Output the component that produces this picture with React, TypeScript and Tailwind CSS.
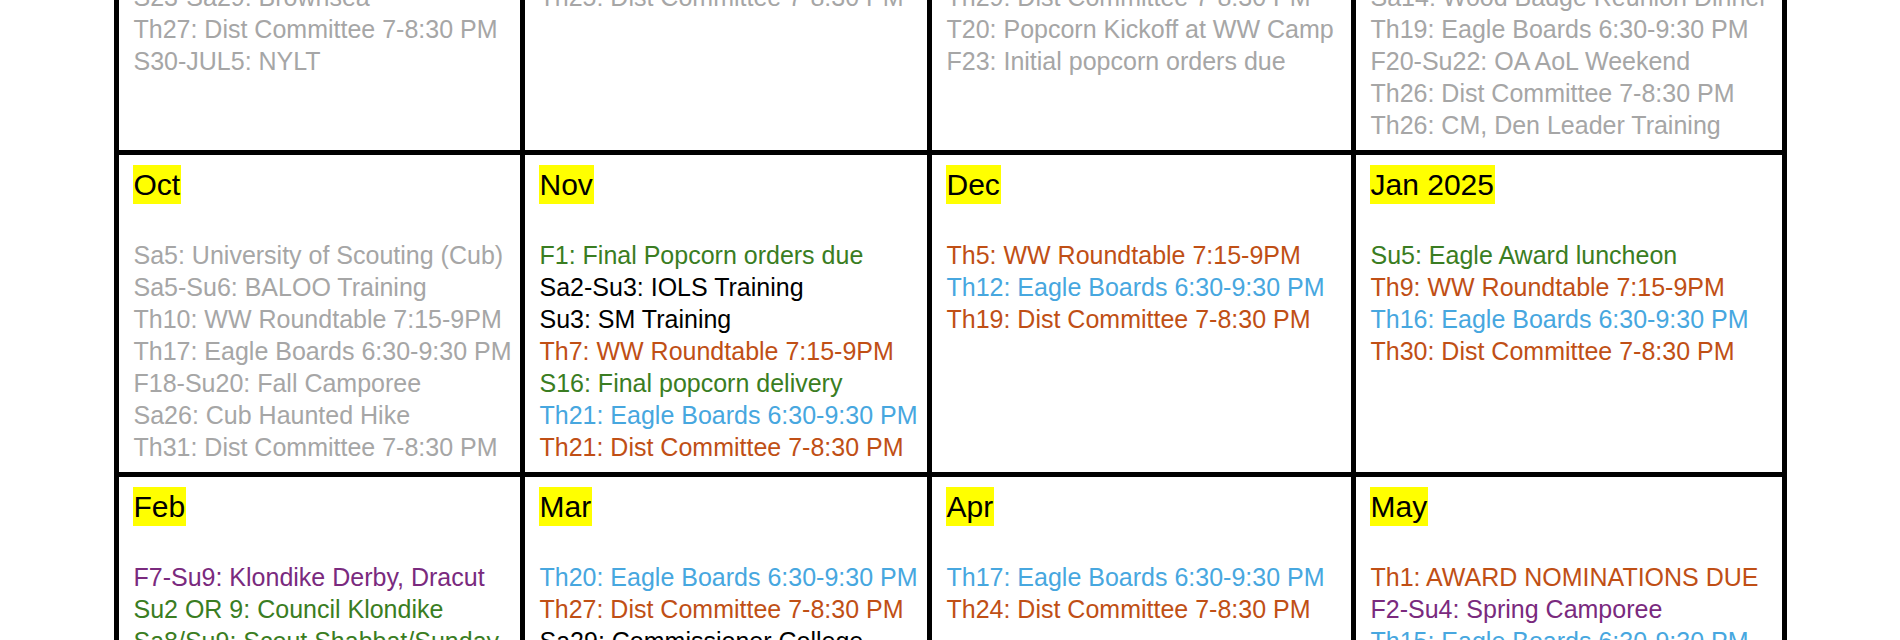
import React from "react";

type Ev = { t: string; c: string };

const G = "text-[#a6a6a6]";
const GR = "text-[#3a7d22]";
const OR = "text-[#c04f15]";
const BL = "text-[#47a7df]";
const PU = "text-[#7a2a7e]";
const BK = "text-black";

type Cell = { month?: string; events: Ev[] };

const row1: Cell[] = [
  {
    events: [
      { t: "S23-Sa29: Brownsea", c: G },
      { t: "Th27: Dist Committee 7-8:30 PM", c: G },
      { t: "S30-JUL5: NYLT", c: G },
    ],
  },
  { events: [{ t: "Th25: Dist Committee 7-8:30 PM", c: G }] },
  {
    events: [
      { t: "Th29: Dist Committee 7-8:30 PM", c: G },
      { t: "T20: Popcorn Kickoff at WW Camp", c: G },
      { t: "F23: Initial popcorn orders due", c: G },
    ],
  },
  {
    events: [
      { t: "Sa14: Wood Badge Reunion Dinner", c: G },
      { t: "Th19: Eagle Boards 6:30-9:30 PM", c: G },
      { t: "F20-Su22: OA AoL Weekend", c: G },
      { t: "Th26: Dist Committee 7-8:30 PM", c: G },
      { t: "Th26: CM, Den Leader Training", c: G },
    ],
  },
];

const row2: Cell[] = [
  {
    month: "Oct",
    events: [
      { t: "Sa5: University of Scouting (Cub)", c: G },
      { t: "Sa5-Su6: BALOO Training", c: G },
      { t: "Th10: WW Roundtable 7:15-9PM", c: G },
      { t: "Th17: Eagle Boards 6:30-9:30 PM", c: G },
      { t: "F18-Su20: Fall Camporee", c: G },
      { t: "Sa26: Cub Haunted Hike", c: G },
      { t: "Th31: Dist Committee 7-8:30 PM", c: G },
    ],
  },
  {
    month: "Nov",
    events: [
      { t: "F1: Final Popcorn orders due", c: GR },
      { t: "Sa2-Su3: IOLS Training", c: BK },
      { t: "Su3: SM Training", c: BK },
      { t: "Th7: WW Roundtable 7:15-9PM", c: OR },
      { t: "S16: Final popcorn delivery", c: GR },
      { t: "Th21: Eagle Boards 6:30-9:30 PM", c: BL },
      { t: "Th21: Dist Committee 7-8:30 PM", c: OR },
    ],
  },
  {
    month: "Dec",
    events: [
      { t: "Th5: WW Roundtable 7:15-9PM", c: OR },
      { t: "Th12: Eagle Boards 6:30-9:30 PM", c: BL },
      { t: "Th19: Dist Committee 7-8:30 PM", c: OR },
    ],
  },
  {
    month: "Jan 2025",
    events: [
      { t: "Su5: Eagle Award luncheon", c: GR },
      { t: "Th9: WW Roundtable 7:15-9PM", c: OR },
      { t: "Th16: Eagle Boards 6:30-9:30 PM", c: BL },
      { t: "Th30: Dist Committee 7-8:30 PM", c: OR },
    ],
  },
];

const row3: Cell[] = [
  {
    month: "Feb",
    events: [
      { t: "F7-Su9: Klondike Derby, Dracut", c: PU },
      { t: "Su2 OR 9: Council Klondike", c: GR },
      { t: "Sa8/Su9: Scout Shabbat/Sunday", c: GR },
    ],
  },
  {
    month: "Mar",
    events: [
      { t: "Th20: Eagle Boards 6:30-9:30 PM", c: BL },
      { t: "Th27: Dist Committee 7-8:30 PM", c: OR },
      { t: "Sa29: Commissioner College", c: BK },
    ],
  },
  {
    month: "Apr",
    events: [
      { t: "Th17: Eagle Boards 6:30-9:30 PM", c: BL },
      { t: "Th24: Dist Committee 7-8:30 PM", c: OR },
    ],
  },
  {
    month: "May",
    events: [
      { t: "Th1: AWARD NOMINATIONS DUE", c: OR },
      { t: "F2-Su4: Spring Camporee", c: PU },
      { t: "Th15: Eagle Boards 6:30-9:30 PM", c: BL },
    ],
  },
];

function CellView({ cell, first }: { cell: Cell; first?: boolean }) {
  return (
    <div
      className={
        "border-r-[5px] border-b-[5px] border-black pl-[14px] pr-[8px] pb-[9px] " +
        (first ? "pt-0" : "pt-[10px]")
      }
    >
      {cell.month && (
        <div className="mb-[35px] h-[39px]">
          <span className="inline-block bg-[#ffff00] px-[1px] text-[30px] leading-[39px] text-black">
            {cell.month}
          </span>
        </div>
      )}
      <div className="flex flex-col">
        {cell.events.map((e, i) => (
          <div key={i} className={"whitespace-nowrap pl-[1px] text-[25px] leading-[32px] " + e.c}>
            {e.t}
          </div>
        ))}
      </div>
    </div>
  );
}

export default function App() {
  return (
    <div className="min-h-[640px] w-full overflow-hidden bg-white font-['Liberation_Sans',Arial,sans-serif]">
      <div className="mx-auto -mt-[24px] grid w-[1673px] grid-cols-[406px_407px_424px_431px] border-t-[5px] border-l-[5px] border-black">
        {row1.map((c, i) => (
          <CellView key={"a" + i} cell={c} first />
        ))}
        {row2.map((c, i) => (
          <CellView key={"b" + i} cell={c} />
        ))}
        {row3.map((c, i) => (
          <CellView key={"c" + i} cell={c} />
        ))}
      </div>
    </div>
  );
}
